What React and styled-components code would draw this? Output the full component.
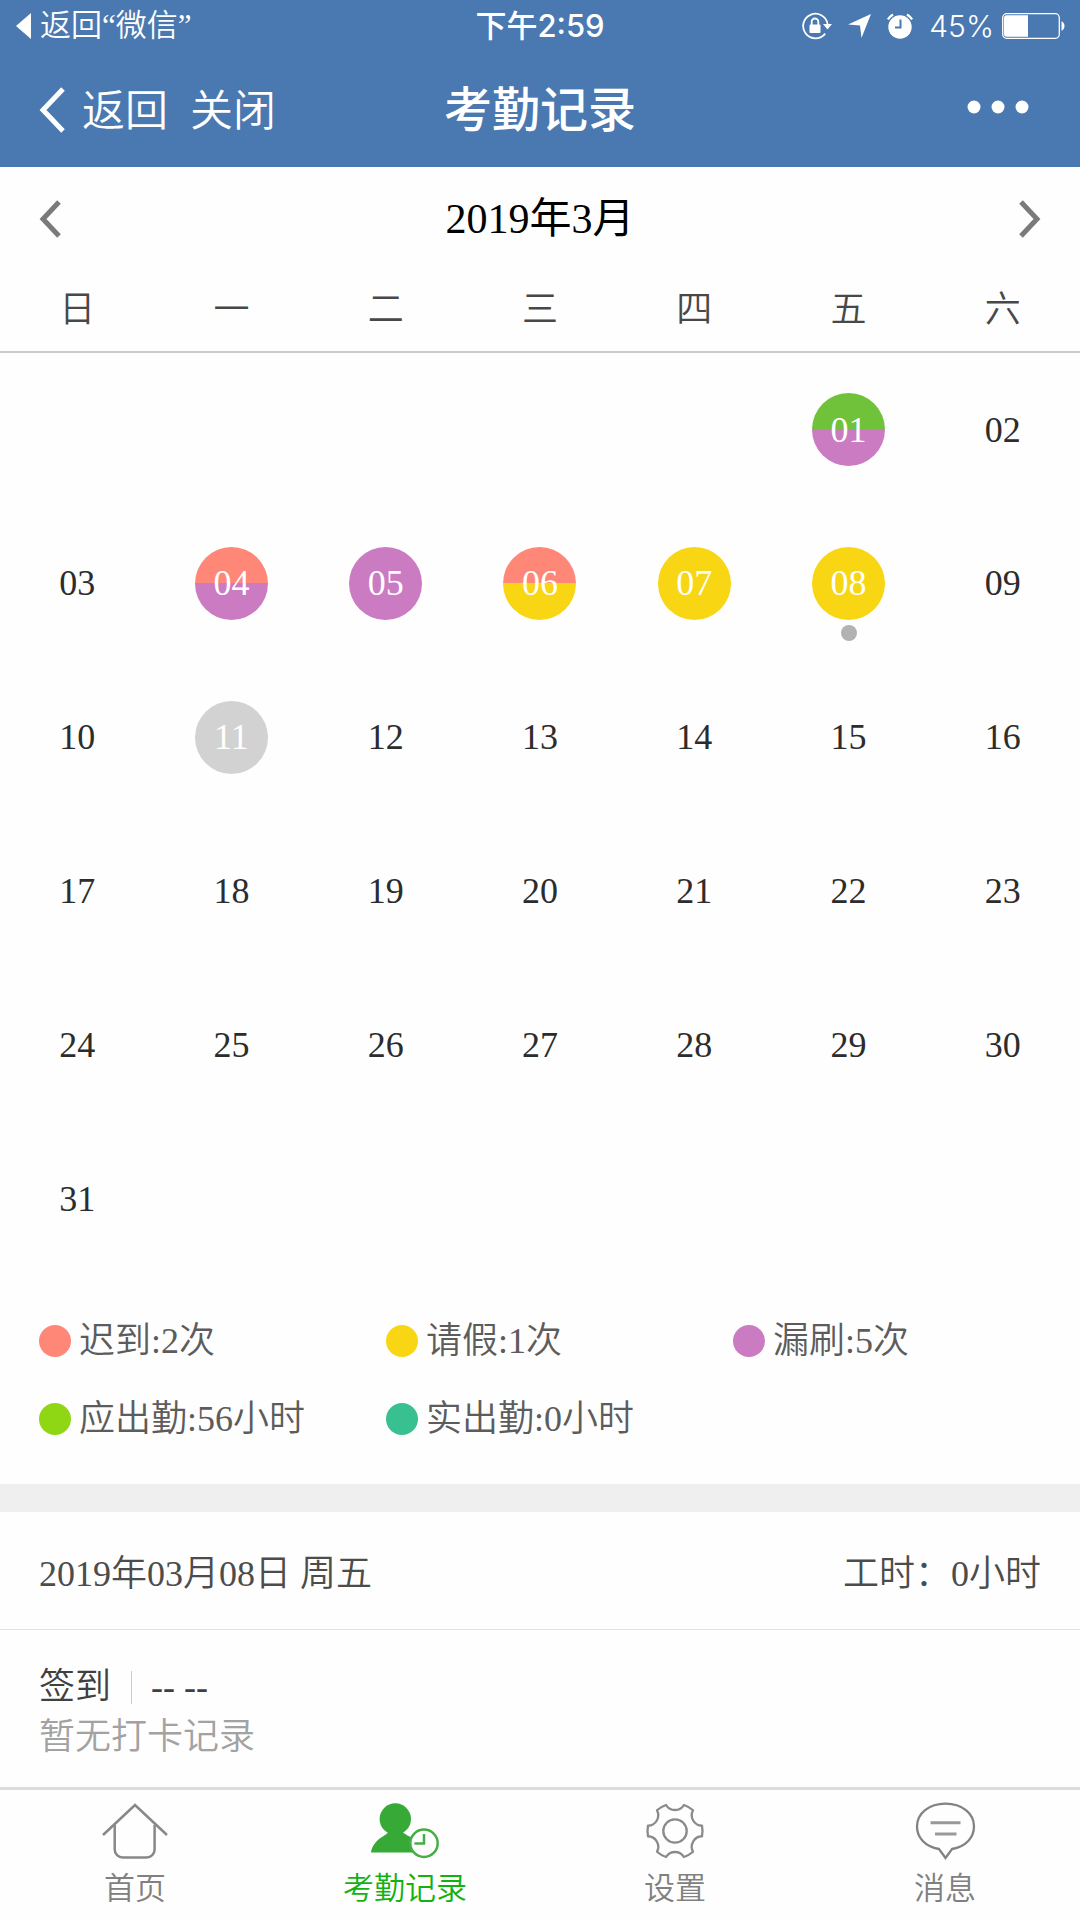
import React, { useState } from "react";
import styled, { createGlobalStyle } from "styled-components";

const sans = `Inter, "Noto Sans CJK SC", sans-serif`;
const serif = `"Liberation Serif", "Noto Sans CJK SC", serif`;

const color = {
  brand: "#4a78b0",
  late: "#ff8778",
  leave: "#f8d614",
  missed: "#cb7bc1",
  normal: "#6fc23a",
  due: "#8fd714",
  actual: "#38c090",
  today: "#d2d2d2",
  active: "#12b212",
};

const GlobalStyle = createGlobalStyle`
  * { box-sizing: border-box; }
  body { margin: 0; background: #fff; }
  button { font: inherit; color: inherit; background: none; border: 0; padding: 0; cursor: pointer; }
  svg { display: block; flex: none; }
`;

const Page = styled.div`
  display: flex;
  flex-direction: column;
  min-height: 100vh;
  background: #fefefe;
  font-family: ${serif};
  font-weight: 350;
`;

const Header = styled.header`
  background: ${color.brand};
  color: #fff;
  font-family: ${sans};
`;

const StatusBar = styled.div`
  display: grid;
  grid-template-columns: 1fr auto 1fr;
  align-items: center;
  height: 52px;
  padding: 0 15px;
  font-size: 31px;
  line-height: 52px;
`;

const BackToApp = styled.button`
  display: flex;
  align-items: center;
  gap: 9px;
  font-family: ${serif};
`;

const Clock = styled.time`
  font-weight: 500;
`;

const StatusIcons = styled.div`
  display: flex;
  align-items: center;
  justify-content: flex-end;
  gap: 16px;
`;

const Battery = styled.span`
  display: flex;
  align-items: center;
  gap: 8px;
  font-size: 30px;
`;

const NavBar = styled.div`
  display: grid;
  grid-template-columns: 1fr auto 1fr;
  align-items: center;
  height: 115px;
  padding: 0 39px;
`;

const NavActions = styled.div`
  display: flex;
  gap: 22px;
  font-size: 43px;
  line-height: 60px;
`;

const NavButton = styled.button`
  display: flex;
  align-items: center;
  gap: 17px;
`;

const Title = styled.h1`
  margin: 0;
  font-size: 48px;
  font-weight: 500;
  line-height: 60px;
`;

const MoreButton = styled.button`
  justify-self: end;
  padding: 20px 12px 26px;
`;

const MonthBar = styled.div`
  display: flex;
  align-items: center;
  justify-content: space-between;
  height: 104px;
  padding: 0 39px;
`;

const MonthLabel = styled.h2`
  margin: 0;
  font-size: 42px;
  font-weight: 400;
  line-height: 60px;
  color: #000;
`;

const Calendar = styled.table`
  width: 100%;
  table-layout: fixed;
  border-collapse: collapse;
  font-size: 36px;
  color: #2c2c2c;
`;

const Weekday = styled.th`
  height: 81px;
  padding: 0 0 2px;
  border-bottom: 2px solid #ccc;
  font-weight: 350;
  line-height: 48px;
  color: #484848;
`;

const DayCell = styled.td`
  height: 154px;
  padding: 0;
  text-align: center;
`;

const Day = styled.button`
  position: relative;
  width: 73px;
  height: 73px;
  border-radius: 50%;
  line-height: 70px;
  vertical-align: middle;
  color: ${(p) => (p.$top ? "#fff" : "inherit")};
  background: ${(p) =>
    p.$top ? `linear-gradient(${p.$top} 50%, ${p.$bottom || p.$top} 50%)` : "none"};
`;

const SelectedDot = styled.span`
  position: absolute;
  top: 78px;
  left: 50%;
  width: 16px;
  height: 16px;
  margin-left: -8px;
  border-radius: 50%;
  background: #b2b2b2;
`;

const Legend = styled.ul`
  display: grid;
  grid-template-columns: repeat(3, 1fr);
  row-gap: 30px;
  margin: 0;
  padding: 41px 0 41px 39px;
  list-style: none;
`;

const LegendItem = styled.li`
  display: flex;
  align-items: center;
  gap: 8px;
  font-size: 36px;
  line-height: 48px;
  color: #5c5c5c;
  white-space: nowrap;
`;

const Swatch = styled.span`
  width: 32px;
  height: 32px;
  border-radius: 50%;
  background: ${(p) => p.$color};
`;

const Divider = styled.div`
  height: 28px;
  background: #efefef;
`;

const DayHeader = styled.div`
  display: flex;
  align-items: center;
  justify-content: space-between;
  height: 118px;
  padding: 6px 39px 0;
  border-bottom: 1px solid #e2e2e2;
  font-size: 36px;
  line-height: 48px;
  color: #4c4c4c;
`;

const Punches = styled.section`
  flex: 1;
  padding: 32px 39px 0;
  font-size: 36px;
  line-height: 50px;
  color: #404040;
`;

const PunchRow = styled.div`
  display: flex;
  align-items: center;
`;

const PunchTime = styled.span`
  margin-left: 20px;
  padding-left: 19px;
  border-left: 1px solid #ccc;
  line-height: 33px;
`;

const EmptyNote = styled.p`
  margin: 0;
  color: #a2a2a2;
`;

const TabBar = styled.nav`
  display: grid;
  grid-template-columns: repeat(4, 1fr);
  height: 133px;
  border-top: 3px solid #dcdcdc;
`;

const Tab = styled.a`
  display: flex;
  flex-direction: column;
  align-items: center;
  gap: 6px;
  padding-top: 10px;
  font-family: ${sans};
  font-size: 31px;
  line-height: 44px;
  text-decoration: none;
  color: ${(p) => (p.$active ? color.active : "#808080")};
`;

const Chevron = ({ w, h, stroke, left }) => (
  <svg width={w} height={h} viewBox={`0 0 ${w} ${h}`} fill="none" stroke="currentColor" strokeWidth={stroke} aria-hidden="true">
    <path d={left ? `M${w - 2} 2L4 ${h / 2}L${w - 2} ${h - 2}` : `M2 2L${w - 4} ${h / 2}L2 ${h - 2}`} />
  </svg>
);

const MonthButton = styled.button`
  padding: 20px 0;
  color: #7a7a7a;
`;

const RotationLockIcon = () => (
  <svg width="30" height="28" viewBox="0 0 30 28" aria-hidden="true">
    <path d="M25.6 12A12.3 12.3 0 1 0 23.2 21.6" fill="none" stroke="#fff" strokeWidth="1.8" />
    <path d="M21 12h9l-4.500 5.500z" fill="#fff" />
    <rect x="7.500" y="12.500" width="11" height="8.500" rx="1" fill="#fff" />
    <path d="M9.700 13V9.800a3.300 3.300 0 0 1 6.600 0V13" fill="none" stroke="#fff" strokeWidth="1.800" />
  </svg>
);

const LocationIcon = () => (
  <svg width="23" height="24" viewBox="0 0 23 24" aria-hidden="true">
    <path d="M23 0L13.500 24L12 11.500L0 10.500z" fill="#fff" />
  </svg>
);

const AlarmIcon = () => (
  <svg width="26" height="26" viewBox="0 0 26 26" aria-hidden="true">
    <circle cx="13" cy="14" r="11.700" fill="#fff" />
    <path d="M1 6.500A15 15 0 0 1 6 1.500M20 1.500A15 15 0 0 1 25 6.500" fill="none" stroke="#fff" strokeWidth="2.400" />
    <path d="M13.500 6.500V14.500H8" fill="none" stroke={color.brand} strokeWidth="2" />
  </svg>
);

const BatteryIcon = () => (
  <svg width="63" height="26" viewBox="0 0 63 26" aria-hidden="true">
    <rect x="0.700" y="0.700" width="56.600" height="24.600" rx="4" fill="none" stroke="#fff" strokeWidth="1.300" />
    <path d="M4.500 2.300H26V23.700H4.500a2.500 2.500 0 0 1-2.500-2.500V4.800a2.500 2.500 0 0 1 2.500-2.500z" fill="#fff" />
    <path d="M59.500 8.300c4 1.500 4 8 0 9.500z" fill="#fff" />
  </svg>
);

const HomeIcon = () => (
  <svg width="70" height="60" viewBox="0 0 70 60" fill="none" stroke="#888" strokeWidth="2.500" aria-hidden="true">
    <path d="M3 35L35 5L67 35" />
    <path d="M14.700 25V49.500a8 8 0 0 0 8 8H46.600a8 8 0 0 0 8-8V25" />
  </svg>
);

const AttendanceIcon = () => (
  <svg width="70" height="60" viewBox="0 0 70 60" aria-hidden="true">
    <circle cx="25.300" cy="19" r="15.700" fill="#36a936" />
    <path d="M18 31C18.500 33.500 15.500 34.500 12 37C5.500 41 1.500 47 1 52.500H45V40C41 36 32 34 32.500 31z" fill="#36a936" />
    <circle cx="54" cy="43.300" r="13.700" fill="#fefefe" stroke="#45ae45" strokeWidth="2.500" />
    <path d="M54 34V43.500H44.500" fill="none" stroke="#45ae45" strokeWidth="2.500" />
  </svg>
);

const gearPath = (() => {
  const at = (deg) => {
    const a = (deg * Math.PI) / 180;
    return `${(35 + 27.5 * Math.cos(a)).toFixed(2)} ${(31 + 27.5 * Math.sin(a)).toFixed(2)}`;
  };
  let d = `M${at(-11)}`;
  for (let k = 0; k < 6; k += 1) {
    d += `A27.5 27.5 0 0 1 ${at(k * 60 + 11)}A10.5 10.5 0 0 0 ${at(k * 60 + 49)}`;
  }
  return `${d}z`;
})();

const SettingsIcon = () => (
  <svg width="70" height="60" viewBox="0 0 70 60" fill="none" stroke="#8a8a8a" strokeWidth="2.300" aria-hidden="true">
    <path d={gearPath} strokeLinejoin="round" />
    <circle cx="35" cy="31" r="11.700" />
  </svg>
);

const MessageIcon = () => (
  <svg width="70" height="60" viewBox="0 0 70 60" fill="none" stroke="#828282" strokeWidth="2.300" aria-hidden="true">
    <path d="M29 49C15 46.500 7 37.500 7 26.500C7 13.500 19 3.700 35.500 3.700S64 13.500 64 26.500C64 37.500 56 46.500 42 49L35.500 58z" />
    <path d="M20.500 22.700H50.500M25 34H46.500" stroke="#999" strokeWidth="3" />
  </svg>
);

const weekdays = ["日", "一", "二", "三", "四", "五", "六"];

const marks = {
  1: [color.normal, color.missed],
  4: [color.late, color.missed],
  5: [color.missed],
  6: [color.late, color.leave],
  7: [color.leave],
  8: [color.leave],
  11: [color.today],
};

const weeks = Array.from({ length: 6 }, (_, w) =>
  Array.from({ length: 7 }, (_, d) => {
    const n = w * 7 + d - 4;
    return n >= 1 && n <= 31 ? n : null;
  })
);

const legend = [
  [color.late, "迟到:2次"],
  [color.leave, "请假:1次"],
  [color.missed, "漏刷:5次"],
  [color.due, "应出勤:56小时"],
  [color.actual, "实出勤:0小时"],
];

const tabs = [
  ["首页", HomeIcon],
  ["考勤记录", AttendanceIcon],
  ["设置", SettingsIcon],
  ["消息", MessageIcon],
];

export default function App() {
  const [selected, setSelected] = useState(8);
  const pad = (n) => String(n).padStart(2, "0");

  return (
    <Page>
      <GlobalStyle />
      <Header>
        <StatusBar>
          <BackToApp type="button">
            <svg width="16" height="28" viewBox="0 0 16 28" aria-hidden="true">
              <path d="M16 1V27L1 14z" fill="#fff" />
            </svg>
            返回“微信”
          </BackToApp>
          <Clock>下午2:59</Clock>
          <StatusIcons>
            <RotationLockIcon />
            <LocationIcon />
            <AlarmIcon />
            <Battery>
              45%
              <BatteryIcon />
            </Battery>
          </StatusIcons>
        </StatusBar>
        <NavBar>
          <NavActions>
            <NavButton type="button">
              <Chevron w={26} h={46} stroke={5} left />
              返回
            </NavButton>
            <NavButton type="button">关闭</NavButton>
          </NavActions>
          <Title>考勤记录</Title>
          <MoreButton type="button" aria-label="更多">
            <svg width="62" height="14" viewBox="0 0 62 14" fill="#fff" aria-hidden="true">
              <circle cx="7" cy="7" r="6.500" />
              <circle cx="31" cy="7" r="6.500" />
              <circle cx="55" cy="7" r="6.500" />
            </svg>
          </MoreButton>
        </NavBar>
      </Header>

      <main>
        <MonthBar>
          <MonthButton type="button" aria-label="上个月">
            <Chevron w={22} h={38} stroke={5} left />
          </MonthButton>
          <MonthLabel>2019年3月</MonthLabel>
          <MonthButton type="button" aria-label="下个月">
            <Chevron w={22} h={38} stroke={5} />
          </MonthButton>
        </MonthBar>
        <Calendar>
          <thead>
            <tr>
              {weekdays.map((d) => (
                <Weekday key={d} scope="col">{d}</Weekday>
              ))}
            </tr>
          </thead>
          <tbody>
            {weeks.map((week, w) => (
              <tr key={w}>
                {week.map((n, d) => (
                  <DayCell key={d}>
                    {n && (
                      <Day
                        type="button"
                        $top={marks[n]?.[0]}
                        $bottom={marks[n]?.[1]}
                        onClick={() => setSelected(n)}
                      >
                        {pad(n)}
                        {n === selected && <SelectedDot />}
                      </Day>
                    )}
                  </DayCell>
                ))}
              </tr>
            ))}
          </tbody>
        </Calendar>
        <Legend>
          {legend.map(([c, text]) => (
            <LegendItem key={text}>
              <Swatch $color={c} />
              {text}
            </LegendItem>
          ))}
        </Legend>
      </main>

      <Divider />
      <DayHeader>
        <span>2019年03月08日 周五</span>
        <span>工时：0小时</span>
      </DayHeader>
      <Punches>
        <PunchRow>
          <span>签到</span>
          <PunchTime>-- --</PunchTime>
        </PunchRow>
        <EmptyNote>暂无打卡记录</EmptyNote>
      </Punches>

      <TabBar>
        {tabs.map(([label, Icon], i) => (
          <Tab key={label} href="#" $active={i === 1}>
            <Icon />
            {label}
          </Tab>
        ))}
      </TabBar>
    </Page>
  );
}
